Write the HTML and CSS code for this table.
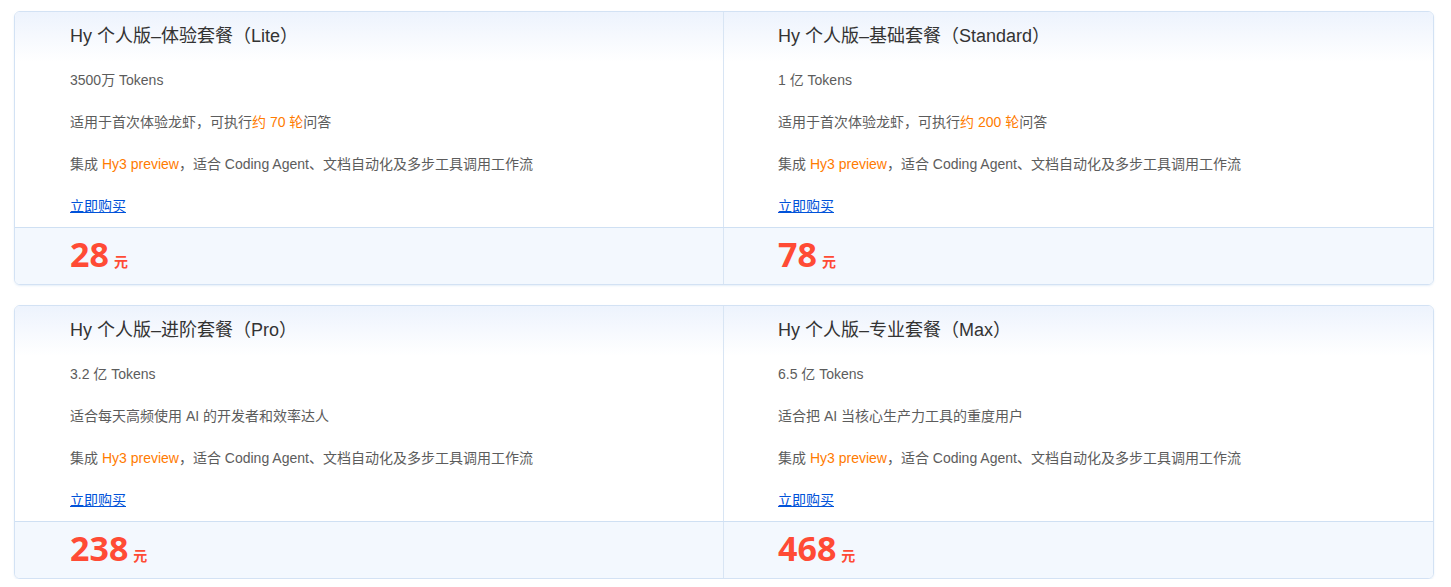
FILE: index.html
```html
<!DOCTYPE html>
<html lang="zh-CN">
<head>
<meta charset="utf-8">
<title>套餐</title>
<link rel="stylesheet" href="styles.css">
</head>
<body>
<div class="plans">
  <section class="card">
    <div class="row body">
      <div class="col">
        <h3 class="title">Hy 个人版–体验套餐（Lite）</h3>
        <p class="line">3500万 Tokens</p>
        <p class="line">适用于首次体验龙虾，可执行<span class="hl">约 70 轮</span>问答</p>
        <p class="line">集成 <span class="hl">Hy3 preview</span>，适合 Coding Agent、文档自动化及多步工具调用工作流</p>
        <p class="line"><a class="buy" href="#">立即购买</a></p>
      </div>
      <div class="col">
        <h3 class="title">Hy 个人版–基础套餐（Standard）</h3>
        <p class="line">1 亿 Tokens</p>
        <p class="line">适用于首次体验龙虾，可执行<span class="hl">约 200 轮</span>问答</p>
        <p class="line">集成 <span class="hl">Hy3 preview</span>，适合 Coding Agent、文档自动化及多步工具调用工作流</p>
        <p class="line"><a class="buy" href="#">立即购买</a></p>
      </div>
    </div>
    <div class="row price-row">
      <div class="col price"><span class="num">28</span><span class="unit">元</span></div>
      <div class="col price"><span class="num">78</span><span class="unit">元</span></div>
    </div>
  </section>

  <section class="card">
    <div class="row body">
      <div class="col">
        <h3 class="title">Hy 个人版–进阶套餐（Pro）</h3>
        <p class="line">3.2 亿 Tokens</p>
        <p class="line">适合每天高频使用 AI 的开发者和效率达人</p>
        <p class="line">集成 <span class="hl">Hy3 preview</span>，适合 Coding Agent、文档自动化及多步工具调用工作流</p>
        <p class="line"><a class="buy" href="#">立即购买</a></p>
      </div>
      <div class="col">
        <h3 class="title">Hy 个人版–专业套餐（Max）</h3>
        <p class="line">6.5 亿 Tokens</p>
        <p class="line">适合把 AI 当核心生产力工具的重度用户</p>
        <p class="line">集成 <span class="hl">Hy3 preview</span>，适合 Coding Agent、文档自动化及多步工具调用工作流</p>
        <p class="line"><a class="buy" href="#">立即购买</a></p>
      </div>
    </div>
    <div class="row price-row">
      <div class="col price"><span class="num">238</span><span class="unit">元</span></div>
      <div class="col price"><span class="num">468</span><span class="unit">元</span></div>
    </div>
  </section>
</div>
</body>
</html>
```

FILE: styles.css
```css
* { box-sizing: border-box; }

html, body {
  margin: 0;
  padding: 0;
  background: #ffffff;
}

body {
  font-family: "Liberation Sans", "Noto Sans CJK SC", sans-serif;
  color: #555;
}

.plans {
  display: flex;
  flex-direction: column;
  gap: 20px;
  padding: 11px 17px 0 14px;
}

.card {
  border: 1px solid #d3e2f4;
  border-radius: 6px;
  overflow: hidden;
  box-shadow: 0 1px 2px rgba(180, 205, 235, 0.35);
}

.row {
  display: grid;
  grid-template-columns: 708px 1fr;
}

.body {
  background: linear-gradient(#edf3fd 0px, #ffffff 50px);
}

.col {
  padding-left: 55px;
}

.col + .col {
  border-left: 1px solid #d8e5f4;
  padding-left: 54px;
}

.title {
  margin: 0;
  height: 47px;
  padding-top: 3px;
  line-height: 43px;
  font-size: 18px;
  font-weight: normal;
  color: #333;
}

.line {
  margin: 0;
  height: 42px;
  line-height: 42px;
  font-size: 14px;
  color: #5c5c5c;
  white-space: nowrap;
}

.hl {
  color: #ff7b00;
}

.buy {
  color: #0052d9;
  text-decoration: underline;
}

.price-row {
  border-top: 1px solid #cfe0f3;
  background: #f3f8fe;
}

.price {
  height: 56px;
  display: flex;
  align-items: baseline;
  gap: 5px;
  padding-top: 4px;
  color: #ff4b35;
}

.num {
  font-family: "Open Sans", "Liberation Sans", sans-serif;
  font-weight: 700;
  font-size: 34px;
  line-height: 44px;
}

.unit {
  font-size: 14px;
  font-weight: 700;
}
```
